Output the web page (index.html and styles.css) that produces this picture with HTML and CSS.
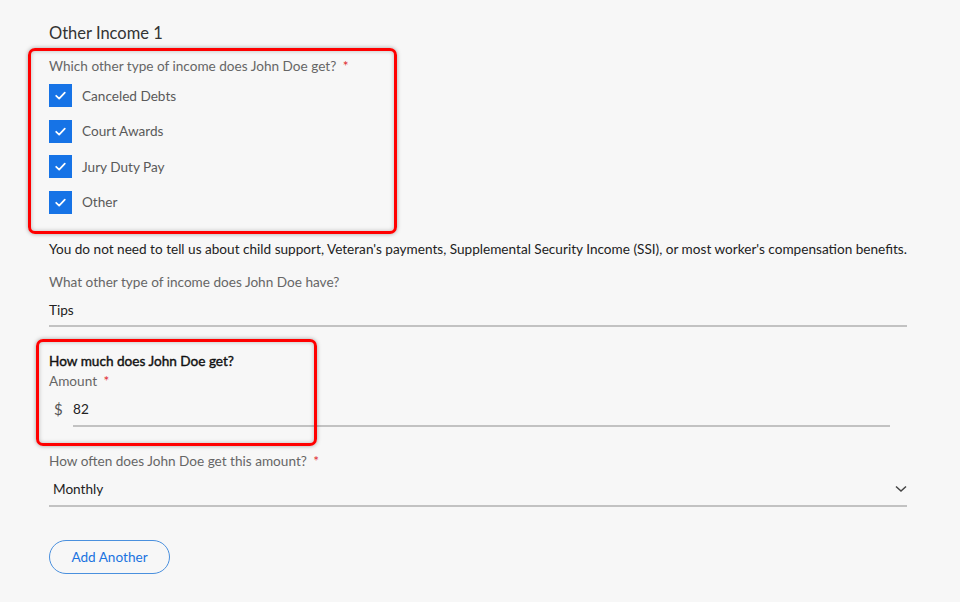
FILE: index.html
```html
<!DOCTYPE html>
<html lang="en">
<head>
<meta charset="utf-8">
<title>Other Income</title>
<link rel="stylesheet" href="styles.css">
</head>
<body>
<main class="form">
  <h2 class="title">Other Income 1</h2>
  <div class="label q1">Which other type of income does John Doe get? <span class="req">*</span></div>
  <div class="checks">
    <label class="check"><span class="box"><svg viewBox="0 0 24 24" width="23" height="23"><polyline points="7.5,12.3 10.6,15.3 16.5,9" fill="none" stroke="#fff" stroke-width="1.8" stroke-linecap="round" stroke-linejoin="round"/></svg></span><span class="check-text">Canceled Debts</span></label>
    <label class="check"><span class="box"><svg viewBox="0 0 24 24" width="23" height="23"><polyline points="7.5,12.3 10.6,15.3 16.5,9" fill="none" stroke="#fff" stroke-width="1.8" stroke-linecap="round" stroke-linejoin="round"/></svg></span><span class="check-text">Court Awards</span></label>
    <label class="check"><span class="box"><svg viewBox="0 0 24 24" width="23" height="23"><polyline points="7.5,12.3 10.6,15.3 16.5,9" fill="none" stroke="#fff" stroke-width="1.8" stroke-linecap="round" stroke-linejoin="round"/></svg></span><span class="check-text">Jury Duty Pay</span></label>
    <label class="check"><span class="box"><svg viewBox="0 0 24 24" width="23" height="23"><polyline points="7.5,12.3 10.6,15.3 16.5,9" fill="none" stroke="#fff" stroke-width="1.8" stroke-linecap="round" stroke-linejoin="round"/></svg></span><span class="check-text">Other</span></label>
  </div>
  <p class="note">You do not need to tell us about child support, Veteran's payments, Supplemental Security Income (SSI), or most worker's compensation benefits.</p>
  <div class="label q2">What other type of income does John Doe have?</div>
  <div class="field tips">Tips</div>
  <div class="subhead">How much does John Doe get?</div>
  <div class="label">Amount <span class="req">*</span></div>
  <div class="amount-row">
    <span class="dollar">$</span>
    <div class="field amount">82</div>
  </div>
  <div class="label q3">How often does John Doe get this amount? <span class="req">*</span></div>
  <div class="field select">
    <span>Monthly</span>
    <svg class="chev" viewBox="0 0 12 8" width="12" height="8"><polyline points="1,1.5 6,6 11,1.5" fill="none" stroke="#444" stroke-width="1.5"/></svg>
  </div>
  <button class="btn" type="button">Add Another</button>
</main>
<div class="highlight h1"></div>
<div class="highlight h2"></div>
</body>
</html>
```
FILE: styles.css
```css
html, body {
  margin: 0;
  padding: 0;
  background: #f7f7f7;
}
body {
  font-family: Lato, "Noto Sans", sans-serif;
  font-size: 13.6px;
  color: #222;
  width: 960px;
  height: 602px;
  overflow: hidden;
  position: relative;
}
.form {
  width: 858px;
  padding: 21px 0 0 49px;
  display: flex;
  flex-direction: column;
}
.title {
  margin: 0;
  font-size: 16.5px;
  font-weight: 400;
  line-height: 24px;
  color: #333;
}
.label {
  line-height: 20px;
  color: #666;
}
.req {
  color: #e0282e;
  margin-left: 3px;
}
.q1 { margin-top: 11px; }
.checks {
  margin-top: 8px;
  display: flex;
  flex-direction: column;
  gap: 12.5px;
}
.check {
  display: flex;
  align-items: center;
  height: 23px;
}
.box {
  width: 23px;
  height: 23px;
  background: #1673e6;
  display: flex;
}
.check-text {
  margin-left: 10px;
  color: #5a5a5a;
  line-height: 20px;
}
.note {
  margin: 25px 0 0;
  line-height: 20px;
  color: #222;
  white-space: nowrap;
}
.q2 { margin-top: 13px; }
.field {
  line-height: 20px;
  color: #222;
  border-bottom: 2px solid #c2c2c2;
}
.tips {
  margin-top: 8px;
  padding-bottom: 5px;
}
.subhead {
  margin-top: 24px;
  line-height: 20px;
  color: #111;
  font-weight: 400;
  -webkit-text-stroke: 0.4px #111;
}
.amount-row {
  margin-top: 8px;
  display: flex;
  width: 841px;
}
.dollar {
  width: 24px;
  padding-left: 5px;
  box-sizing: border-box;
  line-height: 20px;
  font-size: 15px;
  color: #555;
}
.amount {
  flex: 1;
  padding-bottom: 6px;
}
.q3 { margin-top: 24px; }
.select {
  margin-top: 8px;
  padding: 0 0 6px 4px;
  display: flex;
  justify-content: space-between;
  align-items: center;
}
.btn {
  margin-top: 33px;
  align-self: flex-start;
  width: 121px;
  height: 34px;
  border: 1.5px solid #4a90de;
  border-radius: 17px;
  background: transparent;
  color: #1a73e0;
  font-family: inherit;
  font-size: 13.6px;
  padding: 0;
}
.highlight {
  position: absolute;
  border: 3px solid #ff0000;
  border-radius: 7px;
  box-shadow: 0 0 4px rgba(0, 0, 0, 0.35), inset 0 0 4px rgba(0, 0, 0, 0.25);
  box-sizing: border-box;
  pointer-events: none;
}
.h1 {
  left: 28px;
  top: 48px;
  width: 369px;
  height: 186px;
}
.h2 {
  left: 36px;
  top: 339px;
  width: 281px;
  height: 107px;
}
```
